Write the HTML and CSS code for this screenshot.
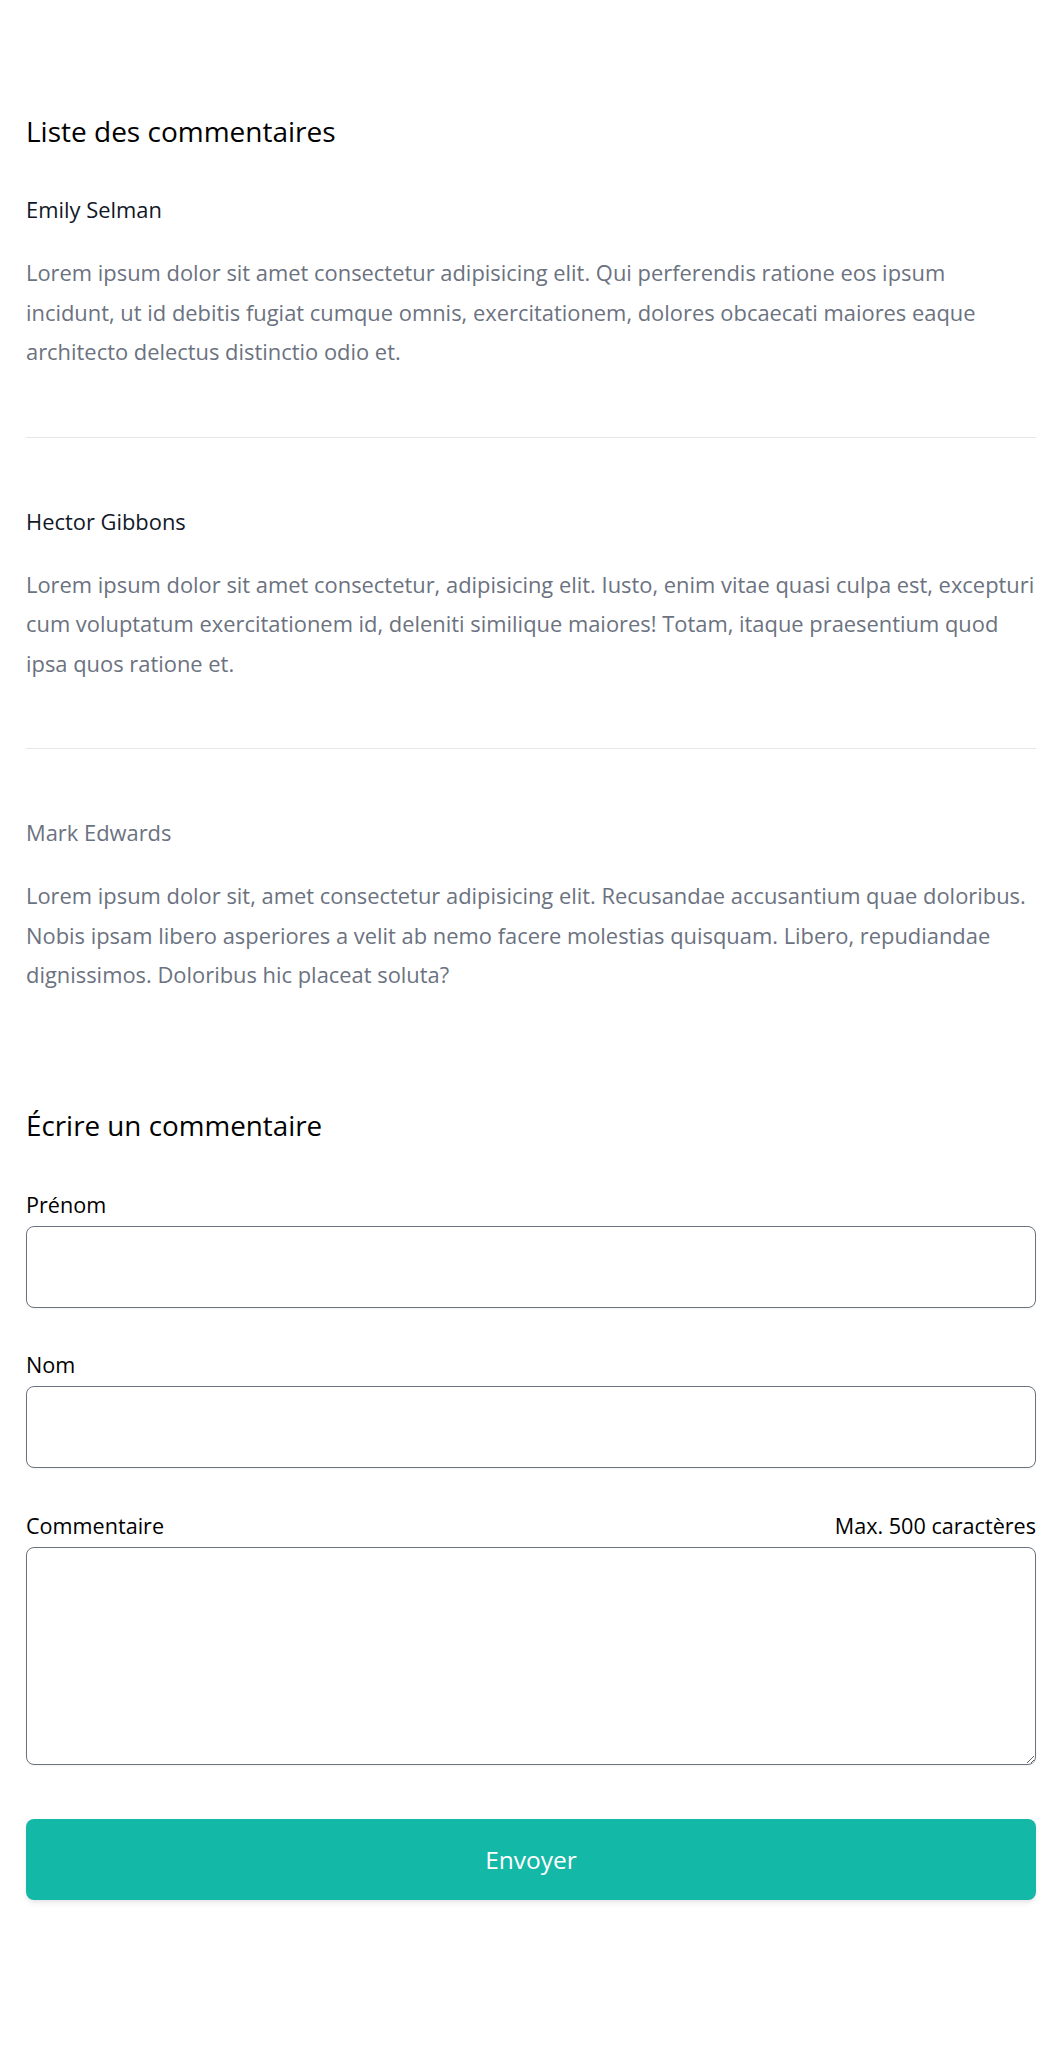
FILE: index.html
```html
<!DOCTYPE html>
<html lang="fr">
<head>
<meta charset="utf-8">
<title>Commentaires</title>
<link rel="stylesheet" href="styles.css">
</head>
<body>
<main class="page">
  <section class="comments">
    <h2 class="title">Liste des commentaires</h2>
    <ul class="comment-list">
      <li class="comment">
        <p class="comment-name">Emily Selman</p>
        <p class="comment-text">Lorem ipsum dolor sit amet consectetur adipisicing elit. Qui perferendis ratione eos ipsum<br>incidunt, ut id debitis fugiat cumque omnis, exercitationem, dolores obcaecati maiores eaque<br>architecto delectus distinctio odio et.</p>
      </li>
      <li class="comment">
        <p class="comment-name">Hector Gibbons</p>
        <p class="comment-text">Lorem ipsum dolor sit amet consectetur, adipisicing elit. Iusto, enim vitae quasi culpa est, excepturi<br>cum voluptatum exercitationem id, deleniti similique maiores! Totam, itaque praesentium quod<br>ipsa quos ratione et.</p>
      </li>
      <li class="comment">
        <p class="comment-name comment-name--muted">Mark Edwards</p>
        <p class="comment-text">Lorem ipsum dolor sit, amet consectetur adipisicing elit. Recusandae accusantium quae doloribus.<br>Nobis ipsam libero asperiores a velit ab nemo facere molestias quisquam. Libero, repudiandae<br>dignissimos. Doloribus hic placeat soluta?</p>
      </li>
    </ul>
  </section>

  <section class="write">
    <h2 class="title">Écrire un commentaire</h2>
    <form class="form">
      <div class="field">
        <label class="label" for="prenom">Prénom</label>
        <input class="input" id="prenom" type="text">
      </div>
      <div class="field">
        <label class="label" for="nom">Nom</label>
        <input class="input" id="nom" type="text">
      </div>
      <div class="field">
        <div class="label-row">
          <label class="label" for="commentaire">Commentaire</label>
          <span class="label">Max. 500 caractères</span>
        </div>
        <textarea class="input textarea" id="commentaire"></textarea>
      </div>
      <button class="button" type="button">Envoyer</button>
    </form>
  </section>
</main>
</body>
</html>
```

FILE: styles.css
```css
* {
  box-sizing: border-box;
}

html, body {
  margin: 0;
  padding: 0;
  background: #ffffff;
}

body {
  font-family: "Open Sans", "Noto Sans", "DejaVu Sans", sans-serif;
  color: #000000;
}

.page {
  padding: 113px 26px 171px;
}

.title {
  margin: 0;
  font-size: 28px;
  line-height: 36px;
  font-weight: 400;
  color: #000000;
}

.write .title {
  font-size: 27.8px;
}

.comment-list {
  list-style: none;
  margin: 45px 0 0;
  padding: 0;
}

.comment {
  padding: 68px 0 65px;
  border-bottom: 1px solid #e5e7eb;
}

.comment:first-child {
  padding-top: 0;
}

.comment:last-child {
  border-bottom: none;
  padding-bottom: 0;
}

.comment-name {
  margin: 0;
  font-size: 21.9px;
  line-height: 32px;
  color: #111827;
}

.comment-name--muted {
  color: #6b7280;
}

.comment-text {
  margin: 27px 0 0;
  font-size: 21.9px;
  line-height: 39.5px;
  color: #6b7280;
  white-space: nowrap;
}

.write {
  margin-top: 112px;
}

.form {
  margin-top: 48px;
  display: flex;
  flex-direction: column;
  gap: 43.5px;
}

.field {
  display: flex;
  flex-direction: column;
  gap: 7px;
}

.label-row {
  display: flex;
  justify-content: space-between;
  align-items: center;
}

.label {
  font-size: 21.6px;
  line-height: 28px;
  color: #000000;
}

.input {
  display: block;
  width: 100%;
  height: 82px;
  margin: 0;
  padding: 12px 16px;
  border: 1px solid #6b7280;
  border-radius: 8px;
  background: #ffffff;
  font-family: inherit;
  font-size: 21.6px;
  box-shadow: 0 1px 2px rgba(0, 0, 0, 0.05);
}

.textarea {
  height: 218px;
  resize: both;
}

.button {
  margin-top: 11px;
  height: 81px;
  width: 100%;
  border: none;
  border-radius: 8px;
  background: #14b8a6;
  color: #ffffff;
  font-family: inherit;
  font-size: 24.5px;
  box-shadow: 0 4px 6px -1px rgba(0, 0, 0, 0.08), 0 2px 4px -1px rgba(0, 0, 0, 0.05);
  cursor: pointer;
}
```
